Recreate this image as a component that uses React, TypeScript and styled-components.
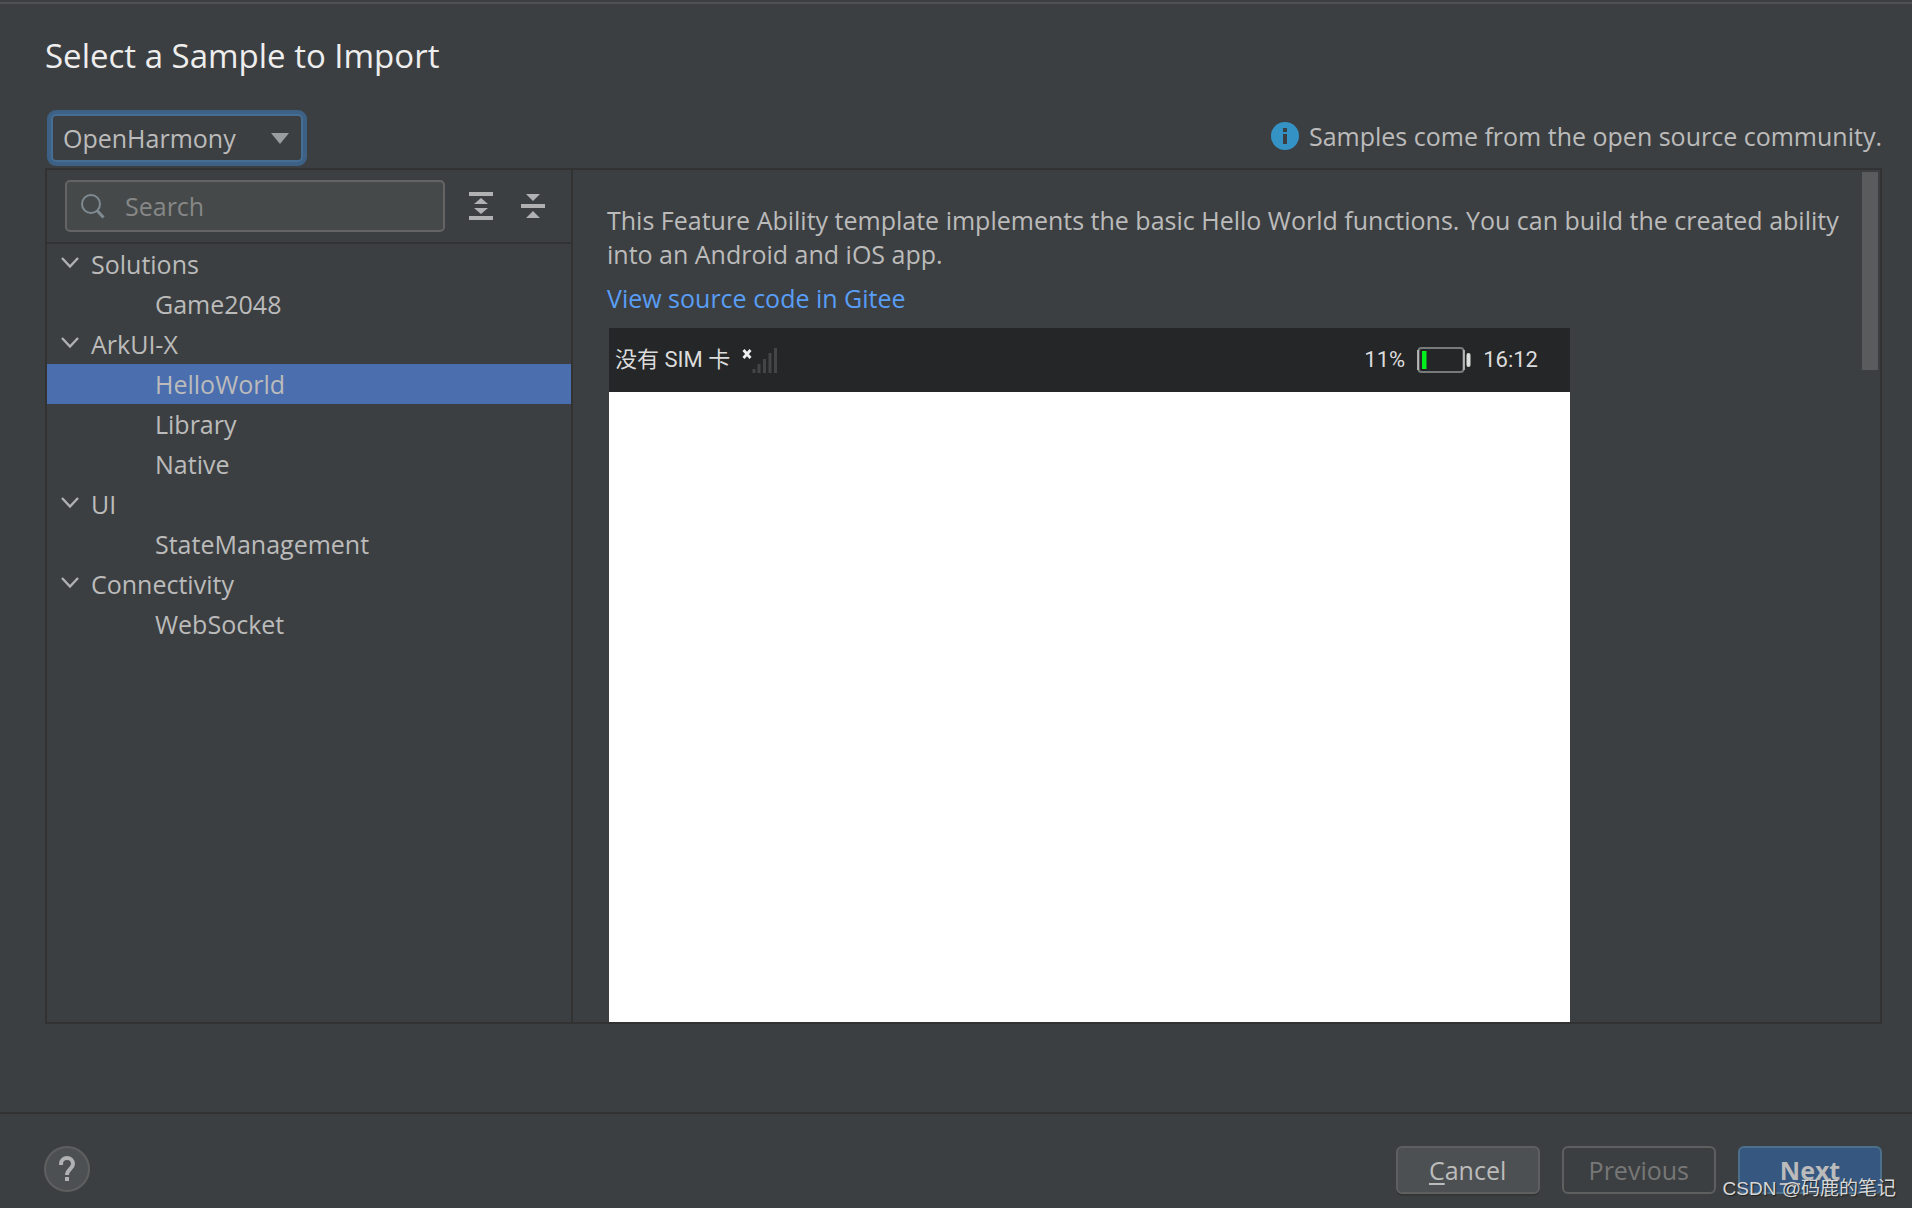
import React, { useState } from "react";
import styled, { createGlobalStyle } from "styled-components";

const color = {
  base: "#3c3f41",
  line: "#323232",
  text: "#bbbbbb",
  field: "#45494a",
  outline: "#646464",
  icon: "#afb1b3",
};

const GlobalStyle = createGlobalStyle`
  *, *::before, *::after { box-sizing: border-box; }
  body {
    margin: 0;
    background: ${color.base};
    color: ${color.text};
    font-family: "Open Sans", "Noto Sans CJK SC", sans-serif;
    font-size: 25px;
    line-height: 34px;
  }
  button, input, select { font: inherit; color: inherit; margin: 0; }
`;

const Dialog = styled.div`
  display: flex;
  flex-direction: column;
  height: 100vh;
  min-height: 700px;
  padding-top: 2px;
  overflow: hidden;
`;

const Body = styled.main`
  flex: 1;
  min-height: 0;
  display: flex;
  flex-direction: column;
  border-top: 2px solid #515151;
  padding: 28px 30px 88px 45px;
`;

const Title = styled.h1`
  margin: 0;
  font-size: 33px;
  line-height: 48px;
  font-weight: 400;
  color: #eeeeee;
`;

const SourceBar = styled.div`
  display: flex;
  align-items: center;
  justify-content: space-between;
  padding: 34px 0 6px 6px;
`;

const SelectWrap = styled.div`
  display: grid;
  align-items: center;
  width: 252px;

  > * { grid-area: 1 / 1; }
  svg { justify-self: end; margin-right: 14px; pointer-events: none; }
`;

const SourceSelect = styled.select`
  appearance: none;
  width: 100%;
  height: 48px;
  padding: 0 40px 0 10px;
  border: 2px solid #466d94;
  border-radius: 5px;
  outline: none;
  background: ${color.base};
  box-shadow: 0 0 0 4px #3d6185;
`;

const Notice = styled.p`
  display: flex;
  align-items: center;
  gap: 10px;
  margin: 0;
  padding-bottom: 4px;
`;

const Panel = styled.section`
  flex: 1;
  min-height: 0;
  display: grid;
  grid-template-columns: 526px 1fr;
  border: 2px solid ${color.line};
`;

const Sidebar = styled.aside`
  border-right: 2px solid ${color.line};
  min-height: 0;
  overflow: hidden;
`;

const Toolbar = styled.div`
  display: flex;
  align-items: center;
  gap: 22px;
  padding: 10px 18px;
  border-bottom: 2px solid ${color.line};
`;

const SearchBox = styled.label`
  flex: 1;
  min-width: 0;
  display: flex;
  align-items: center;
  gap: 18px;
  height: 52px;
  padding: 0 14px;
  border: 2px solid ${color.outline};
  border-radius: 5px;
  background: ${color.field};
`;

const SearchInput = styled.input`
  flex: 1;
  min-width: 0;
  padding: 0;
  border: 0;
  outline: 0;
  background: transparent;
  &::placeholder { color: #878787; opacity: 1; }
`;

const ToolButtons = styled.div`
  display: flex;
  gap: 24px;
  padding-right: 6px;
`;

const IconButton = styled.button`
  display: flex;
  padding: 0;
  border: 0;
  background: none;
`;

const Tree = styled.ul`
  list-style: none;
  margin: 0;
  padding: 0;
`;

const TreeRow = styled.button<{ $child?: boolean; $selected?: boolean }>`
  display: flex;
  align-items: center;
  gap: 10px;
  width: 100%;
  height: 40px;
  padding: 0 0 0 ${(p) => (p.$child ? 108 : 12)}px;
  border: 0;
  text-align: left;
  background: ${(p) => (p.$selected ? "#4b6eaf" : "transparent")};
`;

const Detail = styled.div`
  display: flex;
  min-width: 0;
  min-height: 0;
`;

const DetailContent = styled.article`
  flex: 1;
  min-width: 0;
  padding: 33px 0 0 34px;
  overflow-y: auto;
  scrollbar-width: none;
`;

const ScrollTrack = styled.div`
  width: 20px;
  padding: 2px;
`;

const ScrollThumb = styled.div`
  width: 16px;
  height: 198px;
  background: #595b5d;
`;

const Description = styled.p`
  margin: 0 0 10px;
  max-width: 1240px;
`;

const SourceLink = styled.a`
  display: block;
  color: #589df6;
  text-decoration: none;
`;

const Phone = styled.figure`
  margin: 13px 0 0 2px;
  width: 961px;
  max-width: 100%;
  background: #ffffff;
`;

const StatusBar = styled.div`
  display: flex;
  align-items: center;
  justify-content: space-between;
  height: 64px;
  padding: 0 32px 0 6px;
  background: #252627;
  color: #dcdcdc;
  font-family: Roboto, "Noto Sans CJK SC", sans-serif;
  font-size: 22px;
`;

const StatusGroup = styled.div`
  display: flex;
  align-items: center;
  gap: 12px;
`;

const PhoneScreen = styled.div`
  height: 3400px;
`;

const Footer = styled.footer`
  display: flex;
  align-items: flex-start;
  justify-content: space-between;
  padding: 32px 30px 14px 44px;
  border-top: 2px solid ${color.line};
`;

const HelpButton = styled.button`
  display: flex;
  align-items: center;
  justify-content: center;
  width: 46px;
  height: 46px;
  padding: 0;
  border: 2px solid #5e6060;
  border-radius: 50%;
  background: #4c5052;
`;

const Actions = styled.div`
  display: flex;
  gap: 22px;
`;

const ActionButton = styled.button<{ $kind?: "primary" | "disabled" }>`
  min-width: 144px;
  height: 48px;
  padding: 0 25px;
  border: 2px solid ${(p) => (p.$kind === "primary" ? "#4c708c" : "#5e6060")};
  border-radius: 6px;
  background: ${(p) =>
    p.$kind === "primary" ? "#365880" : p.$kind === "disabled" ? "transparent" : "#4c5052"};
  color: ${(p) => (p.$kind === "disabled" ? "#777777" : color.text)};
  font-weight: ${(p) => (p.$kind === "primary" ? 700 : 400)};
  box-shadow: ${(p) => (p.$kind ? "none" : "0 2px 0 #363636")};

  u { text-decoration-thickness: 2px; text-underline-offset: 3px; }
`;

const Watermark = styled.div`
  position: absolute;
  right: 16px;
  bottom: 6px;
  font-family: "Liberation Sans", "Noto Sans CJK SC", sans-serif;
  font-size: 19px;
  line-height: 26px;
  color: #d8d8d8;
  text-shadow: 1px 1px 1px #202020;
  pointer-events: none;
`;

const Chevron = () => (
  <svg width="22" height="22" viewBox="0 0 22 22" fill="none" aria-hidden="true">
    <path d="M3 5 11 13.500l8-8.500" stroke={color.icon} strokeWidth="2.400" />
  </svg>
);

const SearchIcon = () => (
  <svg width="26" height="26" viewBox="0 0 26 26" fill="none" aria-hidden="true">
    <circle cx="10" cy="11" r="9" stroke="#7f8b91" strokeWidth="2" />
    <path d="m16 17.500 6.500 7" stroke="#7f8b91" strokeWidth="3" />
  </svg>
);

const ExpandIcon = () => (
  <svg width="28" height="28" viewBox="0 0 28 28" fill={color.icon} aria-hidden="true">
    <path d="M2 0h24v4H2zM2 24h24v4H2zM14 6l7 6H7zM14 22l7-6H7z" />
  </svg>
);

const CollapseIcon = () => (
  <svg width="28" height="28" viewBox="0 0 28 28" fill={color.icon} aria-hidden="true">
    <path d="M2 12h24v4H2zM14 9l7-7H7zM14 19l7 7H7z" />
  </svg>
);

const InfoIcon = () => (
  <svg width="28" height="28" viewBox="0 0 28 28" aria-hidden="true">
    <circle cx="14" cy="14" r="14" fill="#3592c4" />
    <path d="M12 6h4v4h-4zM12 12h4v10h-4z" fill={color.base} />
  </svg>
);

const HelpIcon = () => (
  <svg width="18" height="26" viewBox="0 0 18 26" fill="none" aria-hidden="true">
    <path d="M3 9V8a6 6 0 0 1 12 0c0 4.500-6 5.500-6 11" stroke={color.icon} strokeWidth="4" />
    <path d="M7 21h4v4H7z" fill={color.icon} />
  </svg>
);

const SignalIcon = () => (
  <svg width="36" height="26" viewBox="0 0 36 26" fill="none" aria-hidden="true">
    <path d="m1.500 3 7 8m0-8-7 8" stroke="#f0f0f0" strokeWidth="2.800" />
    <path d="M12 26v-4M17 26v-9M22.500 26V12M28 26V6M33.500 26V1" stroke="#444546" strokeWidth="3" />
  </svg>
);

const BatteryIcon = () => (
  <svg width="54" height="28" viewBox="0 0 54 28" aria-hidden="true">
    <rect x="1.500" y="2" width="45" height="24" rx="3" fill="none" stroke="#77797a" strokeWidth="2" />
    <path d="M1 4v20M47 4v20" stroke="#d0d0d0" strokeWidth="1.400" />
    <rect x="5" y="5" width="4.500" height="18" fill="#00f01c" />
    <rect x="49.500" y="7" width="4" height="14" rx="2" fill="#dddddd" />
  </svg>
);

const groups = [
  { name: "Solutions", samples: ["Game2048"] },
  { name: "ArkUI-X", samples: ["HelloWorld", "Library", "Native"] },
  { name: "UI", samples: ["StateManagement"] },
  { name: "Connectivity", samples: ["WebSocket"] },
];

export default function App() {
  const [selected, setSelected] = useState("HelloWorld");

  return (
    <>
      <GlobalStyle />
      <Dialog>
        <Body>
          <Title>Select a Sample to Import</Title>
          <SourceBar>
            <SelectWrap>
              <SourceSelect aria-label="Sample source">
                <option>OpenHarmony</option>
              </SourceSelect>
              <svg width="18" height="11" viewBox="0 0 18 11" aria-hidden="true">
                <path d="M0 0h18L9 11z" fill="#9a9da0" />
              </svg>
            </SelectWrap>
            <Notice>
              <InfoIcon />
              Samples come from the open source community.
            </Notice>
          </SourceBar>
          <Panel>
            <Sidebar>
              <Toolbar>
                <SearchBox>
                  <SearchIcon />
                  <SearchInput type="text" placeholder="Search" aria-label="Search" />
                </SearchBox>
                <ToolButtons>
                  <IconButton type="button" aria-label="Expand all"><ExpandIcon /></IconButton>
                  <IconButton type="button" aria-label="Collapse all"><CollapseIcon /></IconButton>
                </ToolButtons>
              </Toolbar>
              <Tree>
                {groups.map((group) => (
                  <li key={group.name}>
                    <TreeRow type="button" aria-expanded="true">
                      <Chevron />
                      {group.name}
                    </TreeRow>
                    <Tree>
                      {group.samples.map((sample) => (
                        <li key={sample}>
                          <TreeRow
                            type="button"
                            $child
                            $selected={sample === selected}
                            onClick={() => setSelected(sample)}
                          >
                            {sample}
                          </TreeRow>
                        </li>
                      ))}
                    </Tree>
                  </li>
                ))}
              </Tree>
            </Sidebar>
            <Detail>
              <DetailContent>
                <Description>
                  This Feature Ability template implements the basic Hello World functions. You can
                  build the created ability into an Android and iOS app.
                </Description>
                <SourceLink href="#source">View source code in Gitee</SourceLink>
                <Phone>
                  <StatusBar>
                    <StatusGroup>
                      <span>没有 SIM 卡</span>
                      <SignalIcon />
                    </StatusGroup>
                    <StatusGroup>
                      <span>11%</span>
                      <BatteryIcon />
                      <span>16:12</span>
                    </StatusGroup>
                  </StatusBar>
                  <PhoneScreen />
                </Phone>
              </DetailContent>
              <ScrollTrack>
                <ScrollThumb />
              </ScrollTrack>
            </Detail>
          </Panel>
        </Body>
        <Footer>
          <HelpButton type="button" aria-label="Help"><HelpIcon /></HelpButton>
          <Actions>
            <ActionButton type="button"><u>C</u>ancel</ActionButton>
            <ActionButton type="button" $kind="disabled" disabled>Previous</ActionButton>
            <ActionButton type="button" $kind="primary"><u>N</u>ext</ActionButton>
          </Actions>
        </Footer>
        <Watermark>CSDN @码鹿的笔记</Watermark>
      </Dialog>
    </>
  );
}
